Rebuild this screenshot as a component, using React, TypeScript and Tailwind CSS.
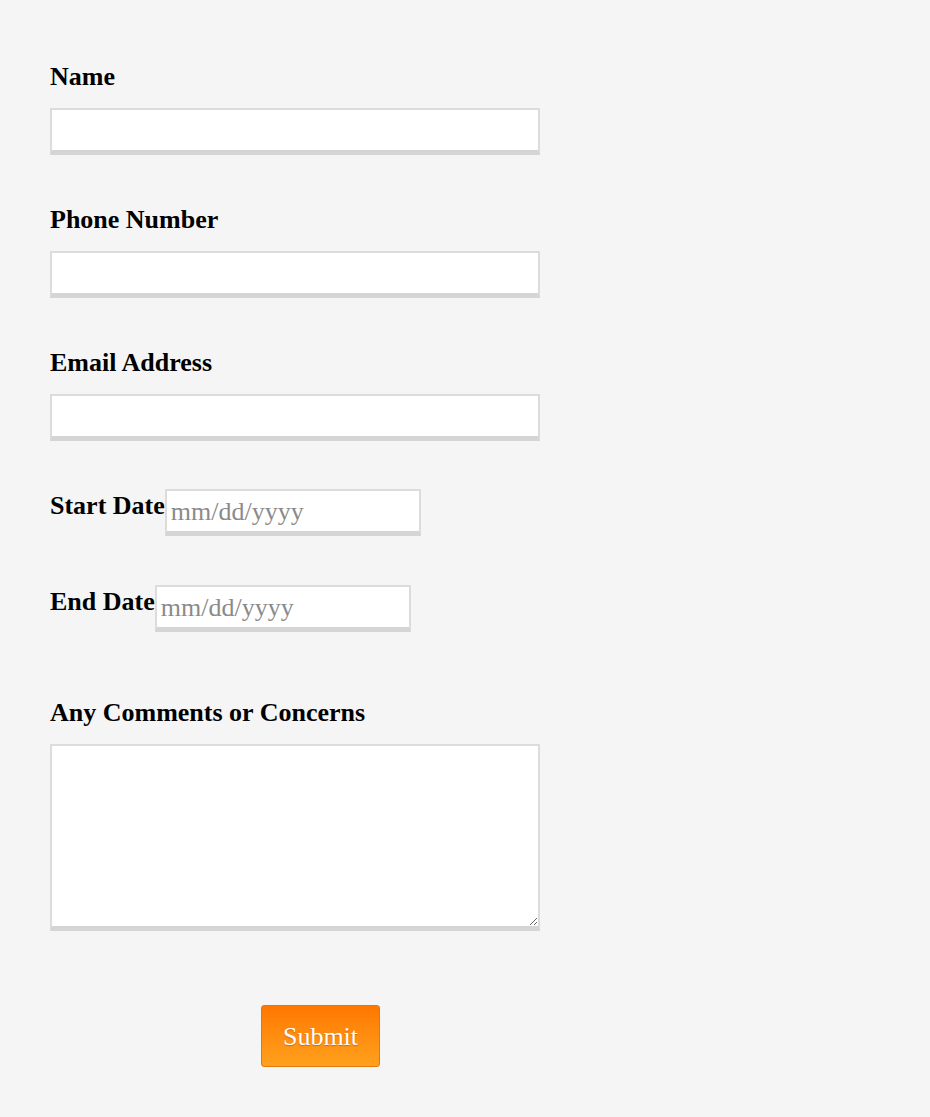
import React from "react";

const font = { fontFamily: '"Liberation Serif", "Times New Roman", serif' };

const inputCls =
  "block w-[490px] h-[47px] bg-white border-2 border-[#dcdcdc] border-b-[5px] border-b-[#d5d5d5] outline-none px-2 text-[26px] text-[#333]";

const labelCls = "block text-[26px] leading-[30px] font-bold text-black";

function Field({ label }: { label: string }) {
  return (
    <div className="mb-[50px]">
      <label className={labelCls + " mb-[16px]"}>{label}</label>
      <input type="text" className={inputCls} />
    </div>
  );
}

function DateRow({ label, last }: { label: string; last?: boolean }) {
  return (
    <div className={"flex items-start " + (last ? "mb-[66px]" : "mb-[49px]")}>
      <label className={labelCls + " pt-[2px]"}>{label}</label>
      <input
        type="text"
        placeholder="mm/dd/yyyy"
        className="block w-[256px] h-[47px] bg-white border-2 border-[#dcdcdc] border-b-[5px] border-b-[#d5d5d5] outline-none px-[4px] pt-[2px] text-[26px] text-[#333] placeholder:text-[#8a8a8a]"
      />
    </div>
  );
}

export default function App() {
  return (
    <div className="min-h-screen bg-[#f5f5f5] pl-[50px] pt-[62px]" style={font}>
      <form onSubmit={(e) => e.preventDefault()}>
        <Field label="Name" />
        <Field label="Phone Number" />
        <div className="mb-[48px]">
          <label className={labelCls + " mb-[16px]"}>Email Address</label>
          <input type="text" className={inputCls} />
        </div>
        <DateRow label="Start Date" />
        <DateRow label="End Date" last />
        <label className={labelCls + " mb-[16px]"}>Any Comments or Concerns</label>
        <textarea className="block w-[490px] h-[187px] bg-white border-2 border-[#dcdcdc] border-b-[5px] border-b-[#d5d5d5] outline-none p-2 text-[22px]" />
        <button
          type="submit"
          className="mt-[74px] ml-[211px] w-[119px] h-[62px] rounded-[3px] border border-[#e4760c] bg-gradient-to-b from-[#ff7700] to-[#ffa11c] text-white text-[26px] [text-shadow:0_1px_1px_rgba(160,70,0,0.5)]"
        >
          Submit
        </button>
      </form>
    </div>
  );
}
